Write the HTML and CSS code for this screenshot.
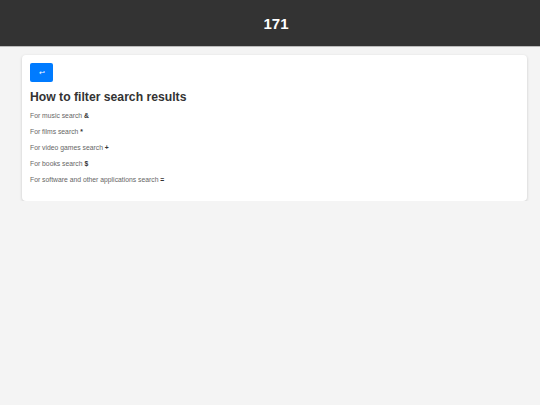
FILE: index.html
```html
<!DOCTYPE html>
<html lang="en">
  <head>
    <meta charset="UTF-8" />
    <meta name="viewport" content="width=device-width, initial-scale=1.0" />
    <title>171</title>
    <link rel="stylesheet" href="styles.css">
  </head>
  <body>
    <header class="top-bar">
      <h1>171</h1>
    </header>

    <div class="card">
      <button class="back-btn" type="button">&#8617;</button>
      <h2>How to filter search results</h2>
      <p>For music search <b>&amp;</b></p>
      <p>For films search <b>*</b></p>
      <p>For video games search <b>+</b></p>
      <p>For books search <b>$</b></p>
      <p>For software and other applications search <b>=</b></p>
    </div>
  </body>
</html>
```

FILE: styles.css
```css
body {
  font-family: "Liberation Sans", Arial, sans-serif;
  margin: 0;
  background-color: #f4f4f4;
}
.top-bar {
  background: #333333;
  height: 46px;
  display: flex;
  align-items: center;
  justify-content: center;
  padding-left: 12px;
  border-bottom: 1px solid #bbbbbb;
}
.top-bar h1 {
  margin: 0;
  color: white;
  font-size: 15px;
  font-weight: bold;
}
.card {
  background: white;
  margin: 8px 13px 0 22px;
  padding: 8px 8px 13px;
  border-radius: 4px;
  box-shadow: 0 1px 3px rgba(0, 0, 0, 0.18);
}
.back-btn {
  display: block;
  width: 23px;
  height: 19px;
  padding: 0;
  background: #007bff;
  color: white;
  border: none;
  border-radius: 2px;
  font-size: 7px;
  line-height: 19px;
}
.card h2 {
  margin: 8px 0 4px;
  font-size: 12.2px;
  color: #333;
  line-height: 14px;
}
.card p {
  margin: 0;
  font-size: 6.8px;
  line-height: 16px;
  color: #666;
}
.card p b {
  color: #333;
}
```
